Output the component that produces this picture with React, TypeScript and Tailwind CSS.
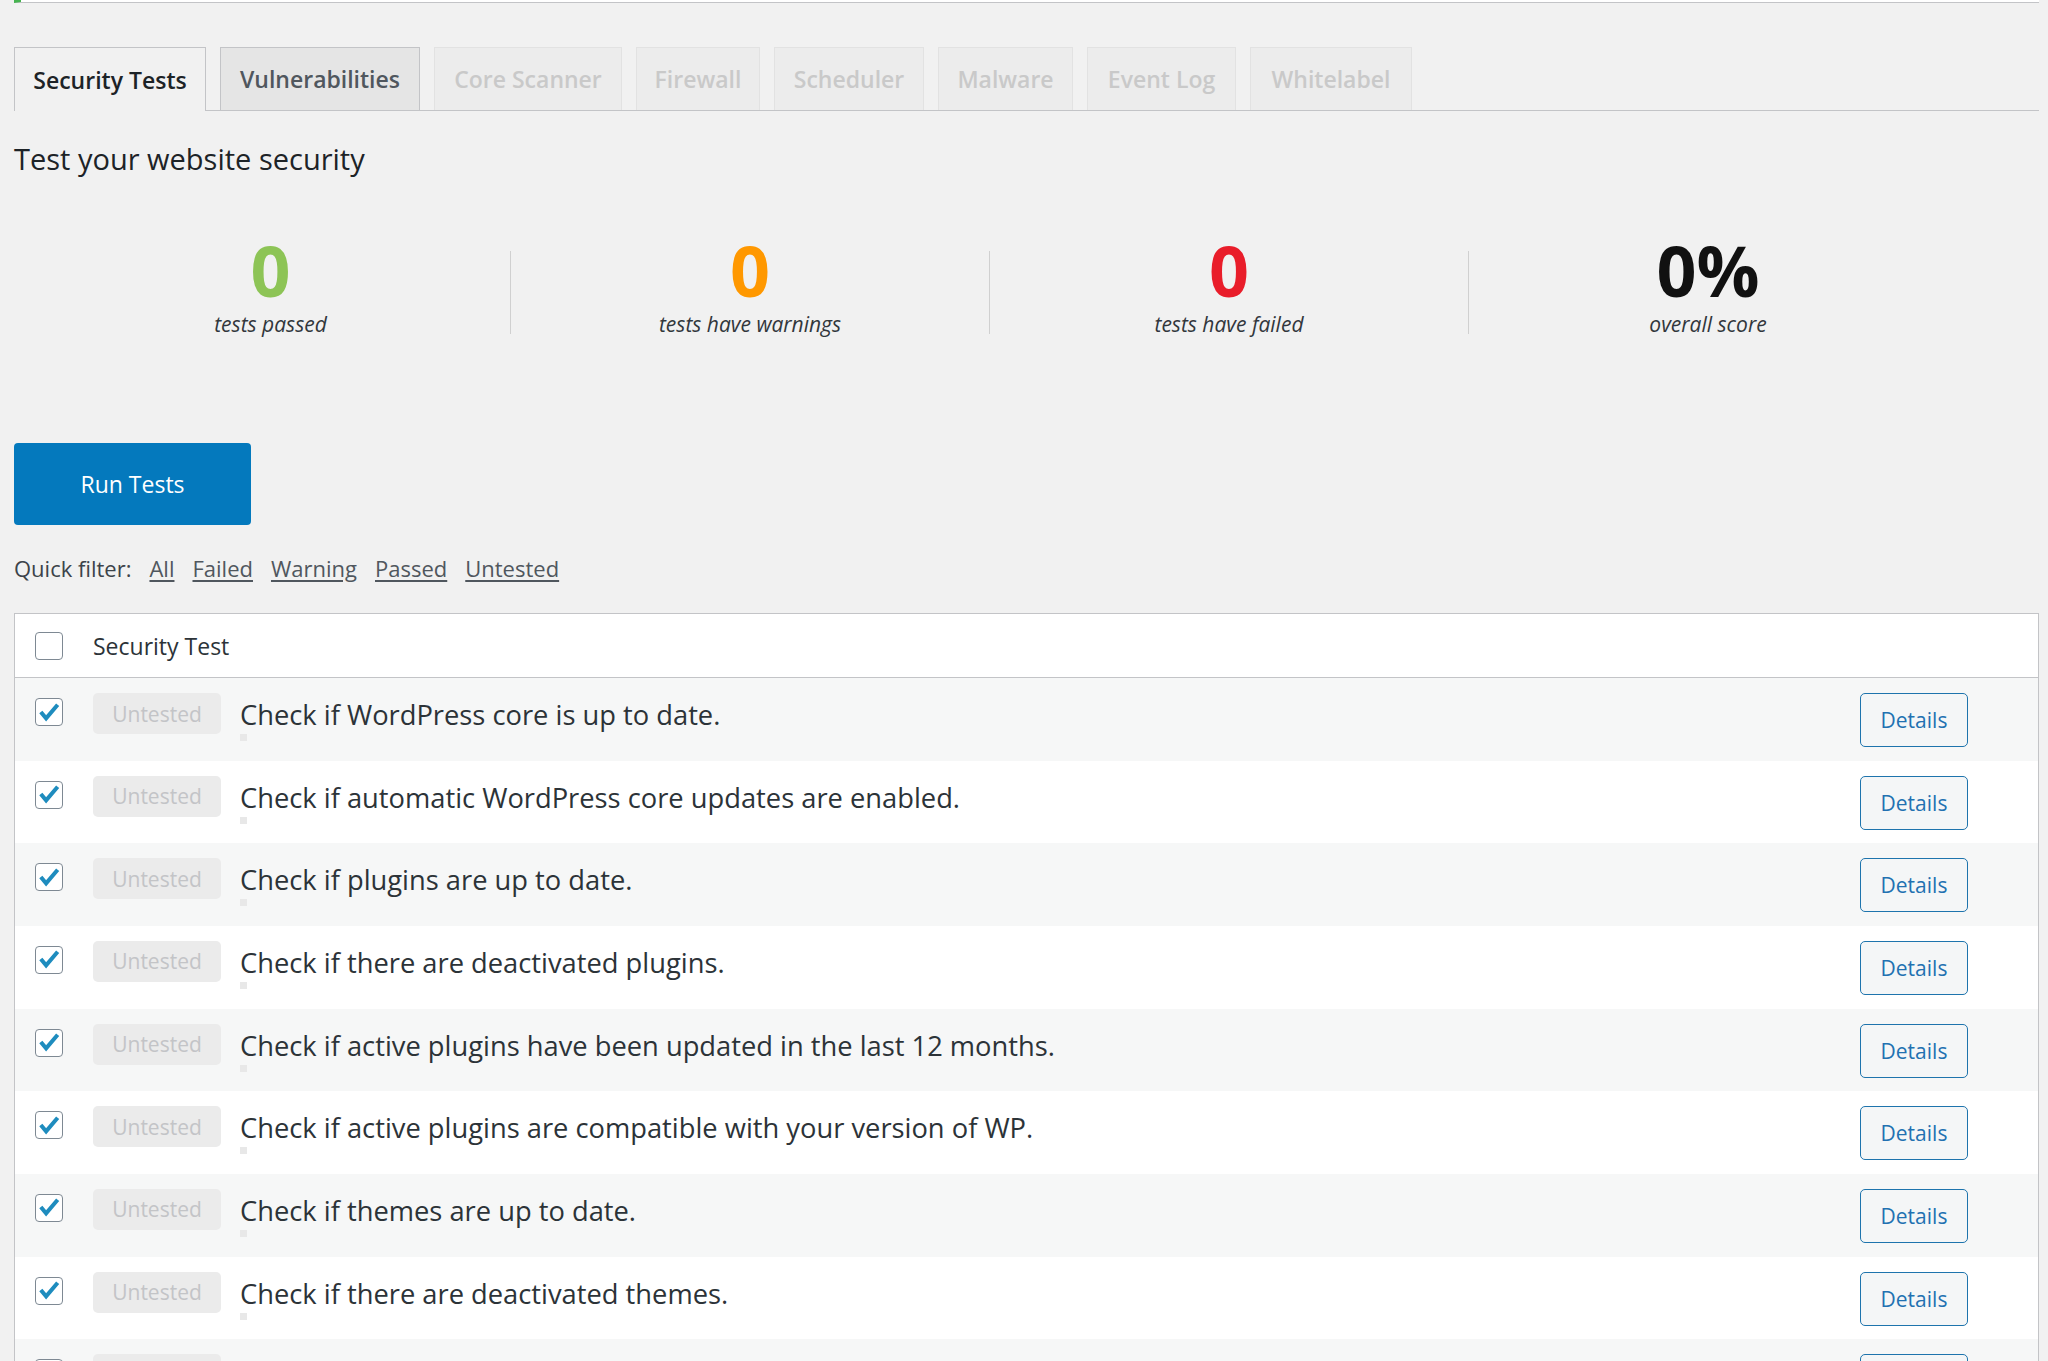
import React from "react";

const tabs = [
  { label: "Security Tests", cls: "w-[192px] bg-[#f1f1f1] border-[#c3c4c7] text-[#1d2327] -mb-px h-[64px]" },
  { label: "Vulnerabilities", cls: "w-[200px] bg-[#e5e5e5] border-[#c3c4c7] text-[#50575e] h-[63px]" },
  { label: "Core Scanner", cls: "w-[188px] bg-[#ececec] border-[#e2e2e2] text-[#c9c9c9] h-[63px]" },
  { label: "Firewall", cls: "w-[124px] bg-[#ececec] border-[#e2e2e2] text-[#c9c9c9] h-[63px]" },
  { label: "Scheduler", cls: "w-[150px] bg-[#ececec] border-[#e2e2e2] text-[#c9c9c9] h-[63px]" },
  { label: "Malware", cls: "w-[135px] bg-[#ececec] border-[#e2e2e2] text-[#c9c9c9] h-[63px]" },
  { label: "Event Log", cls: "w-[149px] bg-[#ececec] border-[#e2e2e2] text-[#c9c9c9] h-[63px]" },
  { label: "Whitelabel", cls: "w-[162px] bg-[#ececec] border-[#e2e2e2] text-[#c9c9c9] h-[63px]" },
];

const stats = [
  { value: "0", label: "tests passed", color: "text-[#8dc456]" },
  { value: "0", label: "tests have warnings", color: "text-[#ff9800]" },
  { value: "0", label: "tests have failed", color: "text-[#e91d2a]" },
  { value: "0%", label: "overall score", color: "text-[#111111]" },
];

const filters = ["All", "Failed", "Warning", "Passed", "Untested"];

const tests = [
  "Check if WordPress core is up to date.",
  "Check if automatic WordPress core updates are enabled.",
  "Check if plugins are up to date.",
  "Check if there are deactivated plugins.",
  "Check if active plugins have been updated in the last 12 months.",
  "Check if active plugins are compatible with your version of WP.",
  "Check if themes are up to date.",
  "Check if there are deactivated themes.",
  "Check if server response headers contain detailed PHP version info.",
];

function Checkbox({ checked }: { checked?: boolean }) {
  return (
    <span className="w-[28px] h-[28px] shrink-0 rounded-[4px] border-[1.5px] border-[#7e8993] bg-white flex items-center justify-center">
      {checked && (
        <svg viewBox="0 0 27 27" className="w-[27px] h-[27px]">
          <path d="M5 13 L10.5 19.5 L22.5 5.5" fill="none" stroke="#1e8cbe" strokeWidth="4.2" strokeLinejoin="miter" />
        </svg>
      )}
    </span>
  );
}

export default function App() {
  return (
    <div className="min-h-screen bg-[#f1f1f1] font-['Open_Sans',sans-serif] text-[#3c434a] pl-[14px] pr-[9px] overflow-hidden">
      {/* notice edge */}
      <div className="h-[3px] bg-white border-b border-[#c3c4c7] border-l-[7px] border-l-[#46b450]" />

      {/* tabs */}
      <div className="mt-[44px] flex items-start gap-[14px] border-b border-[#c3c4c7] h-[64px]">
        {tabs.map((t) => (
          <div
            key={t.label}
            className={`flex items-center justify-center border border-b-0 text-[23px] leading-[30px] font-semibold ${t.cls}`}
          >
            {t.label}
          </div>
        ))}
      </div>

      <h2 className="mt-[30px] text-[29px] leading-[36px] font-normal text-[#1d2327]">Test your website security</h2>

      {/* stats */}
      <div className="mt-[74px] ml-[17px] flex">
        {stats.map((s, i) => (
          <div
            key={s.label}
            className={`w-[479px] h-[83px] flex flex-col items-center ${i > 0 ? "border-l border-[#d0d0d0]" : ""}`}
          >
            <div className={`-mt-[11px] text-[70px] leading-[60px] font-bold ${s.color}`}>{s.value}</div>
            <div className="mt-[11px] text-[21px] leading-[26px] italic text-[#32373c]">{s.label}</div>
          </div>
        ))}
      </div>

      <button className="mt-[109px] w-[237px] h-[82px] rounded-[4px] bg-[#0479bd] text-white text-[23px] leading-[30px] flex items-center justify-center">
        Run Tests
      </button>

      <div className="mt-[29px] flex items-center gap-[18px] text-[22px] leading-[28px]">
        <span className="text-[#3c434a]">Quick filter:</span>
        {filters.map((f) => (
          <span key={f} className="underline underline-offset-[3px] text-[#50575e]">
            {f}
          </span>
        ))}
      </div>

      {/* table */}
      <div className="mt-[31px] border border-[#c3c4c7] bg-white">
        <div className="h-[64px] flex items-start border-b border-[#c3c4c7] bg-white">
          <div className="pl-[20px] pt-[18px]">
            <Checkbox />
          </div>
          <div className="ml-[30px] pt-[17px] text-[23px] leading-[30px] text-[#2c3338]">Security Test</div>
        </div>
        {tests.map((t, i) => (
          <div
            key={t}
            className={`h-[82.67px] flex items-start pt-[15px] ${i % 2 === 0 ? "bg-[#f6f7f7]" : "bg-white"}`}
          >
            <div className="pl-[20px] pt-[5px]">
              <Checkbox checked />
            </div>
            <span className="ml-[30px] w-[128px] h-[41px] shrink-0 rounded-[5px] bg-[#ebebeb] text-[#c3c4c7] text-[21px] leading-[28px] flex items-center justify-center">
              Untested
            </span>
            <div className="ml-[19px] pt-[4px] flex flex-col">
              <span className="text-[27.3px] leading-[36px] text-[#2c3338]">{t}</span>
              <span className="mt-[1px] w-[7px] h-[7px] bg-[#e8e8e8]" />
            </div>
            <button className="ml-auto mr-[70px] w-[108px] h-[54px] shrink-0 rounded-[5px] border border-[#1e74ad] bg-[#f4f6f7] text-[#2271b1] text-[21px] leading-[28px] flex items-center justify-center">
              Details
            </button>
          </div>
        ))}
      </div>
    </div>
  );
}
